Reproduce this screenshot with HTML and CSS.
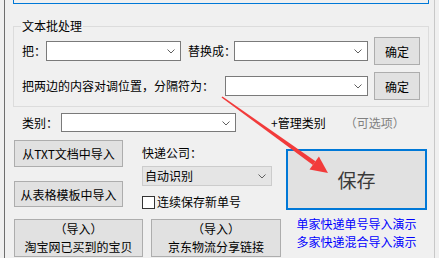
FILE: index.html
```html
<!DOCTYPE html>
<html lang="zh">
<head>
<meta charset="utf-8">
<link rel="stylesheet" href="styles.css">
</head>
<body>
<div class="window">
  <div class="edge-left"></div>
  <div class="main">
    <div class="topbar"></div>
    <fieldset class="group">
      <legend>文本批处理</legend>
      <div class="grow r1">
        <span class="lbl">把：</span>
        <div class="combo w135"><span class="chev"><svg width="8" height="5" viewBox="0 0 8 5"><path d="M0.5 0.5 L4 4 L7.5 0.5" fill="none" stroke="#606060" stroke-width="1"/></svg></span></div>
        <span class="lbl l2">替换成：</span>
        <div class="combo w134"><span class="chev"><svg width="8" height="5" viewBox="0 0 8 5"><path d="M0.5 0.5 L4 4 L7.5 0.5" fill="none" stroke="#606060" stroke-width="1"/></svg></span></div>
        <button class="btn ok">确定</button>
      </div>
      <div class="grow r2">
        <span class="lbl">把两边的内容对调位置，分隔符为：</span>
        <div class="combo w143"><span class="chev"><svg width="8" height="5" viewBox="0 0 8 5"><path d="M0.5 0.5 L4 4 L7.5 0.5" fill="none" stroke="#606060" stroke-width="1"/></svg></span></div>
        <button class="btn ok">确定</button>
      </div>
    </fieldset>

    <div class="catrow">
      <span class="lbl">类别：</span>
      <div class="combo w175"><span class="chev"><svg width="8" height="5" viewBox="0 0 8 5"><path d="M0.5 0.5 L4 4 L7.5 0.5" fill="none" stroke="#606060" stroke-width="1"/></svg></span></div>
      <span class="manage">+管理类别</span>
      <span class="optional">（可选项）</span>
    </div>

    <div class="lower">
      <div class="left">
        <div class="lefttop">
          <div class="btncol">
            <button class="btn b1">从TXT文档中导入</button>
            <button class="btn b2">从表格模板中导入</button>
          </div>
          <div class="express">
            <div class="elabel">快递公司：</div>
            <div class="combo disabled w130"><span class="ctext">自动识别</span><span class="chev"><svg width="8" height="5" viewBox="0 0 8 5"><path d="M0.5 0.5 L4 4 L7.5 0.5" fill="none" stroke="#606060" stroke-width="1"/></svg></span></div>
            <label class="check"><span class="box"></span>连续保存新单号</label>
          </div>
        </div>
        <div class="leftbottom">
          <button class="btn big w129"><span class="bl">（导入）</span><span class="bl">淘宝网已买到的宝贝</span></button>
          <button class="btn big w130b"><span class="bl">（导入）</span><span class="bl">京东物流分享链接</span></button>
        </div>
      </div>
      <div class="right">
        <button class="save">保存</button>
        <div class="links">
          <a class="link">单家快递单号导入演示</a>
          <a class="link">多家快递混合导入演示</a>
        </div>
      </div>
    </div>
  </div>
  <div class="edge-right"></div>
</div>
<svg class="arrow" width="439" height="258" viewBox="0 0 439 258">
  <polygon points="222.5,96.4 315.5,161.3 312.9,164.9 221.5,97.6" fill="#f23b3b"/>
  <polygon points="328,173 309.5,169.6 318.9,156.6" fill="#f23b3b"/>
</svg>
</body>
</html>
```

FILE: styles.css
```css
* { box-sizing: border-box; }
html, body {
  margin: 0;
  padding: 0;
}
body {
  width: 439px;
  height: 258px;
  overflow: hidden;
  position: relative;
  background: #f0f0f0;
  font-family: "Noto Sans CJK SC", "Microsoft YaHei", sans-serif;
  font-size: 12px;
  color: #000;
}
.window {
  display: flex;
  height: 258px;
}
.edge-left {
  width: 5px;
  border-right: 1px solid #6e6e6e;
  background: #f0f0f0;
}
.edge-right {
  width: 5px;
  border-left: 1px solid #c8c8c8;
}
.main {
  width: 429px;
  display: flex;
  flex-direction: column;
}
.topbar {
  margin-left: 8px;
  width: 416px;
  height: 4px;
  border: 1px solid #0078d7;
  border-top: none;
}
.group {
  margin: 15px 0 0 8px;
  width: 416px;
  padding: 0 7px 6px 8px;
  border: 1px solid #dcdcdc;
  min-width: 0;
}
.group legend {
  padding: 0 1px;
  margin-left: -1px;
  line-height: 14px;
  font-size: 12px;
}
.grow {
  display: flex;
  align-items: center;
  height: 28px;
}
.r1 { margin-top: 4px; }
.r2 { margin-top: 7px; }
.lbl {
  white-space: nowrap;
  line-height: 16px;
}
.l2 { margin-left: 7px; margin-right: -2px; }
.r2 .lbl { width: 203px; }
.combo {
  position: relative;
  height: 20px;
  background: #fff;
  border: 1px solid #7a7a7a;
  flex: none;
}
.chev {
  position: absolute;
  right: 5px;
  top: 7px;
  line-height: 0;
}
.w135 { width: 135px; }
.w134 { width: 134px; }
.w143 { width: 143px; }
.w175 { width: 175px; height: 19px; }
.w130 { width: 130px; }
.btn {
  font-family: inherit;
  font-size: 12px;
  color: #000;
  background: #e1e1e1;
  border: 1px solid #adadad;
  padding: 0;
  margin: 0;
  flex: none;
}
.ok {
  width: 46px;
  height: 28px;
  margin-left: 6px;
}
.catrow {
  display: flex;
  align-items: center;
  margin: 6px 0 0 17px;
  height: 19px;
}
.catrow .lbl { margin-right: 3px; }
.manage { margin-left: 35px; }
.optional { margin-left: 19px; color: #808080; }
.lower {
  display: flex;
  margin: 8px 0 0 9px;
}
.left {
  width: 267px;
  display: flex;
  flex-direction: column;
}
.lefttop {
  display: flex;
}
.btncol {
  display: flex;
  flex-direction: column;
  width: 109px;
}
.b1 { height: 27px; width: 109px; }
.b2 { height: 26px; width: 109px; margin-top: 14px; }
.express {
  margin-left: 19px;
  display: flex;
  flex-direction: column;
}
.elabel {
  line-height: 16px;
  margin-top: 5px;
}
.disabled {
  margin-top: 5px;
  background: #e5e5e5;
  border-color: #cccccc;
  height: 20px;
}
.ctext {
  position: absolute;
  left: 2px;
  top: 1px;
  line-height: 16px;
}
.check {
  display: flex;
  align-items: center;
  margin-top: 9px;
  height: 14px;
  line-height: 16px;
}
.box {
  width: 13px;
  height: 13px;
  background: #fff;
  border: 1px solid #333;
  margin-right: 2px;
}
.leftbottom {
  display: flex;
  margin-top: 10px;
}
.big {
  height: 38px;
  display: flex;
  flex-direction: column;
  align-items: center;
  justify-content: flex-start;
  padding-top: 0;
}
.bl {
  display: block;
  line-height: 17.5px;
  height: 17.5px;
  white-space: nowrap;
}
.w129 { width: 129px; }
.w130b { width: 130px; margin-left: 8px; }
.right {
  margin-left: 5px;
  width: 141px;
  display: flex;
  flex-direction: column;
}
.save {
  margin-top: 9px;
  width: 141px;
  height: 61px;
  background: #e1e1e1;
  border: 2px solid #0078d7;
  font-family: inherit;
  font-size: 19px;
  color: #3a3a3a;
  padding: 0;
}
.links {
  margin-top: 5px;
  display: flex;
  flex-direction: column;
  align-items: center;
}
.link {
  color: #0000ff;
  line-height: 18px;
}
.arrow {
  position: absolute;
  left: 0;
  top: 0;
  pointer-events: none;
}
```
